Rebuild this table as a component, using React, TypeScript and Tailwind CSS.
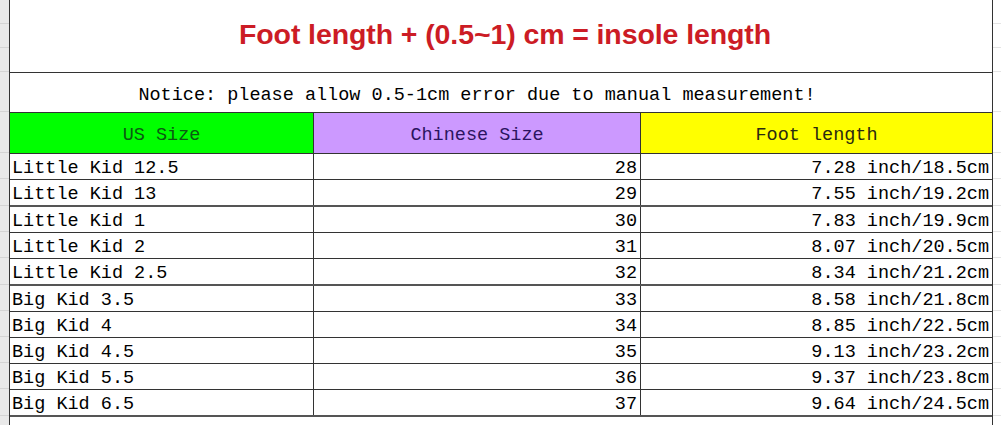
const rows = [
  { us: 'Little Kid 12.5', cn: '28', foot: '7.28 inch/18.5cm', thick: false },
  { us: 'Little Kid 13', cn: '29', foot: '7.55 inch/19.2cm', thick: true },
  { us: 'Little Kid 1', cn: '30', foot: '7.83 inch/19.9cm', thick: false },
  { us: 'Little Kid 2', cn: '31', foot: '8.07 inch/20.5cm', thick: false },
  { us: 'Little Kid 2.5', cn: '32', foot: '8.34 inch/21.2cm', thick: true },
  { us: 'Big Kid 3.5', cn: '33', foot: '8.58 inch/21.8cm', thick: false },
  { us: 'Big Kid 4', cn: '34', foot: '8.85 inch/22.5cm', thick: false },
  { us: 'Big Kid 4.5', cn: '35', foot: '9.13 inch/23.2cm', thick: false },
  { us: 'Big Kid 5.5', cn: '36', foot: '9.37 inch/23.8cm', thick: false },
  { us: 'Big Kid 6.5', cn: '37', foot: '9.64 inch/24.5cm', thick: true },
];

const gridRows = [24, 24, 24, 40, 41, 26, 27, 26, 26, 27, 26, 26, 26, 26, 27];

const App = () => {
  return (
    <div className="flex w-[1001px] h-[425px] overflow-hidden bg-white font-['Liberation_Mono',monospace] text-[18.5px] text-black">
      {/* spreadsheet gutter */}
      <div className="w-[9px] shrink-0 bg-[#e9e9e9]">
        {gridRows.map((h, i) => (
          <div key={i} className="border-b border-[#d4d4d4]" style={{ height: h }} />
        ))}
      </div>

      <div className="w-[984px] shrink-0 border-x border-[#333]">
        <div className="h-[73px] border-b border-[#333] flex items-center justify-center pb-[3px] pl-[8px]">
          <h1 className="font-['Liberation_Sans',Arial,sans-serif] font-bold text-[28.5px] text-[#cc1c25] tracking-[-0.1px]">
            Foot length + (0.5~1) cm = insole length
          </h1>
        </div>
        <div className="h-[40px] border-b border-[#333] flex items-center justify-center pr-[48px] pt-[6px] text-[18.5px]">
          Notice: please allow 0.5-1cm error due to manual measurement!
        </div>
        <div className="flex h-[41px] border-b border-[#333]">
          <div className="w-[304px] bg-[#00ff00] border-r border-[#333] flex items-center justify-center text-[#0b5a12] pt-[6px]">
            US Size
          </div>
          <div className="w-[327px] bg-[#cc99ff] border-r border-[#333] flex items-center justify-center text-[#2b1460] pt-[6px]">
            Chinese Size
          </div>
          <div className="flex-1 bg-[#ffff00] flex items-center justify-center text-[#2a2a10] pt-[6px]">
            Foot length
          </div>
        </div>
        {rows.map((r) => (
          <div
            key={r.us}
            className={`flex leading-none ${r.thick ? 'h-[27px] border-b-2 border-[#555]' : 'h-[26px] border-b border-[#333]'}`}
          >
            <div className="w-[304px] border-r border-[#333] flex items-center pl-[2px] pt-[6px]">{r.us}</div>
            <div className="w-[327px] border-r border-[#333] flex items-center justify-end pr-[3px] pt-[6px]">{r.cn}</div>
            <div className="flex-1 flex items-center justify-end pr-[3px] pt-[6px]">{r.foot}</div>
          </div>
        ))}
      </div>

      {/* faint spreadsheet grid beyond the table */}
      <div className="flex-1">
        {gridRows.map((h, i) => (
          <div key={i} className="border-b border-[#e4e4e4]" style={{ height: h }} />
        ))}
      </div>
    </div>
  );
};

export default App;
